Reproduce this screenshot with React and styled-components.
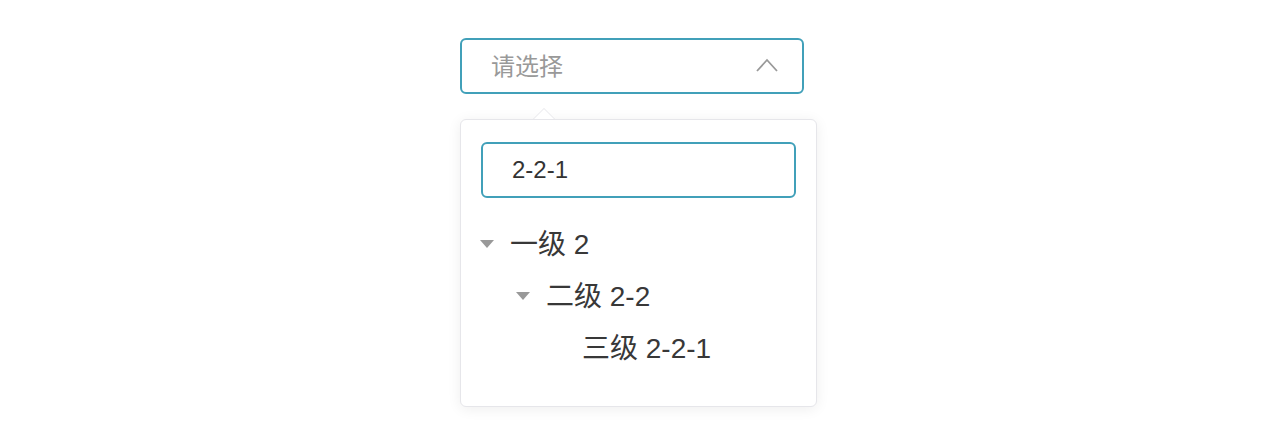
import React from 'react';
import styled, { createGlobalStyle } from 'styled-components';

const GlobalStyle = createGlobalStyle`
  body {
    margin: 0;
    background: #fff;
    font-family: "Liberation Sans", "Noto Sans CJK SC", sans-serif;
  }
`;

const Page = styled.div`
  padding: 38px 0 0 460px;
  height: 440px;
  box-sizing: border-box;
`;

const Picker = styled.div`
  position: relative;
  width: 357px;
  display: flex;
  flex-direction: column;
  gap: 25px;
`;

const Select = styled.div`
  box-sizing: border-box;
  width: 344px;
  height: 56px;
  border: 2px solid #41a0b9;
  border-radius: 6px;
  display: flex;
  align-items: center;
  justify-content: space-between;
  padding: 0 24px 3px 29px;
`;

const Placeholder = styled.span`
  font-size: 24px;
  color: #999;
`;

const Popup = styled.div`
  position: relative;
  box-sizing: border-box;
  width: 357px;
  border: 1px solid #e6e6ea;
  border-radius: 6px;
  background: #fff;
  box-shadow: 0 2px 14px rgba(0, 0, 0, 0.07);
  padding: 22px 20px 34px;
`;

const Arrow = styled.div`
  position: absolute;
  top: -12px;
  left: 72px;
  width: 0;
  height: 0;
  border-left: 11px solid transparent;
  border-right: 11px solid transparent;
  border-bottom: 11px solid #e6e6ea;

  &::after {
    content: '';
    position: absolute;
    left: -10px;
    top: 1px;
    border-left: 10px solid transparent;
    border-right: 10px solid transparent;
    border-bottom: 10px solid #fff;
  }
`;

const Search = styled.div`
  box-sizing: border-box;
  height: 56px;
  border: 2px solid #41a0b9;
  border-radius: 6px;
  display: flex;
  align-items: center;
  padding-left: 29px;
  font-size: 24px;
  color: #333;
`;

const Tree = styled.div`
  margin: 18px 0 0 -6px;
  display: flex;
  flex-direction: column;
`;

const Row = styled.div`
  height: 52px;
  display: flex;
  align-items: center;
  padding-left: ${({ depth }) => depth * 36}px;
`;

const Switcher = styled.span`
  width: 24px;
  height: 24px;
  margin-top: 4px;
  display: flex;
  align-items: center;
  justify-content: center;

  &::before {
    content: '';
    display: ${({ leaf }) => (leaf ? 'none' : 'block')};
    border-left: 7px solid transparent;
    border-right: 7px solid transparent;
    border-top: 8px solid #999;
  }
`;

const Label = styled.span`
  margin-left: 11px;
  font-size: 28px;
  color: #383838;
`;

const nodes = [
  { depth: 0, label: '一级 2' },
  { depth: 1, label: '二级 2-2' },
  { depth: 2, label: '三级 2-2-1', leaf: true },
];

function Chevron() {
  return (
    <svg width="22" height="14" viewBox="0 0 22 14" fill="none">
      <path d="M1 13 L11 2 L21 13" stroke="#999" strokeWidth="1.8" />
    </svg>
  );
}

export default function App() {
  return (
    <Page>
      <GlobalStyle />
      <Picker>
        <Select>
          <Placeholder>请选择</Placeholder>
          <Chevron />
        </Select>
        <Popup>
          <Arrow />
          <Search>2-2-1</Search>
          <Tree>
            {nodes.map((n) => (
              <Row key={n.label} depth={n.depth}>
                <Switcher leaf={n.leaf} />
                <Label>{n.label}</Label>
              </Row>
            ))}
          </Tree>
        </Popup>
      </Picker>
    </Page>
  );
}
